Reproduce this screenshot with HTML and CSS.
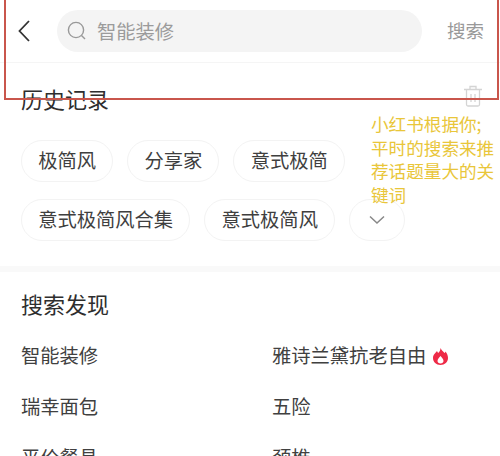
FILE: index.html
```html
<!DOCTYPE html>
<html lang="zh-CN">
<head>
<meta charset="utf-8">
<title>搜索</title>
<link rel="stylesheet" href="styles.css">
</head>
<body>
<div class="page">
  <header class="top">
    <svg class="back" width="14" height="24" viewBox="0 0 14 24"><path d="M12 2 2.500 12 12 22" fill="none" stroke="#333" stroke-width="1.800"/></svg>
    <div class="search">
      <svg class="lens" width="20" height="20" viewBox="0 0 20 20"><circle cx="9" cy="9" r="7.600" fill="none" stroke="#999" stroke-width="1.400"/><path d="M14.500 14.500 18 18" stroke="#999" stroke-width="1.400" fill="none"/></svg>
      <span>智能装修</span>
    </div>
    <span class="go">搜索</span>
  </header>
  <section class="history">
    <div class="head">
      <h2>历史记录</h2>
      <svg class="trash" width="20" height="22" viewBox="0 0 20 22"><path d="M1 4.500h18M7 4V1.500h6V4M3.500 5v14.500a1.500 1.500 0 0 0 1.500 1.500h10a1.500 1.500 0 0 0 1.500-1.500V5M8 9v8M12 9v8" fill="none" stroke="#d4d4d4" stroke-width="1.300"/></svg>
    </div>
    <div class="chips">
      <span class="chip">极简风</span>
      <span class="chip">分享家</span>
      <span class="chip">意式极简</span>
    </div>
    <div class="chips">
      <span class="chip">意式极简风合集</span>
      <span class="chip">意式极简风</span>
      <span class="chip more"><svg width="18" height="10" viewBox="0 0 18 10"><path d="M2 1.500 9 8l7-6.500" fill="none" stroke="#888" stroke-width="1.500"/></svg></span>
    </div>
  </section>
  <section class="discover">
    <h2>搜索发现</h2>
    <ul class="list">
      <li>智能装修</li>
      <li>雅诗兰黛抗老自由 <svg class="fire" width="15" height="17" viewBox="0 0 15 17"><path fill-rule="evenodd" d="M7.500 0c1 2.500 2.500 3 4 5 .6-.3.800-.8 1-1.500C14 5.500 15 7.500 15 10c0 4-3.200 7-7.500 7S0 14 0 10c0-3.500 2.500-5 4-7 .5 1 .8 1.500 1.200 2C6.500 4 7.500 2 7.500 0Zm0 8C6.500 9.500 4.500 10.500 4.500 13c0 1.500 1.300 2.500 3 2.500s3-1 3-2.500c0-2.500-2-3.500-3-5Z" fill="#ee2a47"/></svg></li>
      <li>瑞幸面包</li>
      <li>五险</li>
      <li>平价餐具</li>
      <li>颈椎</li>
    </ul>
  </section>
  <div class="frame"></div>
  <p class="note">小红书根据你;<br>平时的搜索来推<br>荐话题量大的关<br>键词</p>
</div>
</body>
</html>
```
FILE: styles.css
```css
* { box-sizing: border-box; }
html, body { margin: 0; padding: 0; background: #fff; }
body { font-family: "Noto Sans CJK SC", "Noto Sans", sans-serif; color: #3a3a3a; }
.page { position: relative; width: 500px; height: 456px; overflow: hidden; }
.top { height: 63px; padding: 10px 16px 10px 17px; display: flex; align-items: flex-start; border-bottom: 1px solid #f5f5f5; }
.back { margin-top: 9px; flex: none; }
.search { margin-left: 26px; width: 365px; height: 42px; border-radius: 21px; background: #f4f4f4; display: flex; align-items: center; padding-left: 10px; gap: 10px; color: #9b9b9b; font-size: 19.300px; }
.go { margin-left: 25px; font-size: 18.500px; line-height: 40px; color: #999; }
.history { padding: 19px 21px 0; height: 209px; border-bottom: 6px solid #f9f9f9; }
.head { display: flex; align-items: center; justify-content: space-between; height: 32px; margin-bottom: 26px; }
h2 { margin: 0; font-size: 22px; font-weight: 400; line-height: 32px; color: #2e2e2e; }
.trash { margin-right: -4px; margin-top: -4px; }
.chips { display: flex; gap: 14px; margin-bottom: 17px; }
.chip { height: 42px; padding: 0 16.200px; border: 1px solid #f3f3f3; border-radius: 21px; font-size: 19.300px; line-height: 38px; color: #3f3f3f; white-space: nowrap; }
.more { width: 56px; padding: 0; display: flex; align-items: center; justify-content: center; }
.discover { padding: 15px 21px 0; }
.list { list-style: none; margin: 22px 0 0; padding: 0; display: grid; grid-template-columns: 251px 1fr; grid-auto-rows: 51px; font-size: 19.300px; line-height: 28px; color: #404040; }
.list li { display: block; white-space: nowrap; }
.fire { vertical-align: -2px; margin-left: 2px; }
.frame { position: absolute; left: 4px; top: -10px; width: 495px; height: 110px; border: 2px solid #c9564c; }
.note { position: absolute; left: 371px; top: 112px; margin: 0; font-size: 17.600px; line-height: 23.600px; color: #e9c63a; white-space: nowrap; }
```
